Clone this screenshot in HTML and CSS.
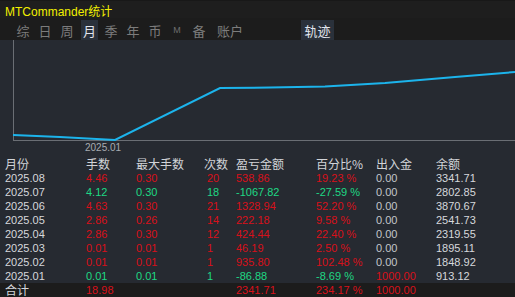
FILE: index.html
```html
<!DOCTYPE html>
<html lang="zh">
<head>
<meta charset="utf-8">
<link rel="stylesheet" href="styles.css">
</head>
<body>
<div class="app">
  <div class="title">MTCommander统计</div>
  <div class="tabs">
    <span class="tab">综</span>
    <span class="tab">日</span>
    <span class="tab">周</span>
    <span class="tab active">月</span>
    <span class="tab">季</span>
    <span class="tab">年</span>
    <span class="tab">币</span>
    <span class="tab small">M</span>
    <span class="tab">备</span>
    <span class="tab wide">账户</span>
    <span class="tab track">轨迹</span>
  </div>
  <div class="chart">
    <svg width="515" height="117" viewBox="0 0 515 117">
      <line x1="13.5" y1="0" x2="13.5" y2="100.5" stroke="#6a6e74" stroke-width="1"/>
      <line x1="13" y1="100.5" x2="515" y2="100.5" stroke="#6a6e74" stroke-width="1"/>
      <polyline points="13,95 60,97 115,100 220,48 270,47.5 325,46.5 385,43 455,37 515,32" fill="none" stroke="#1cb4ec" stroke-width="2"/>
      <text x="85" y="111" class="axis-label">2025.01</text>
    </svg>
  </div>
  <div class="table">
    <div class="row head">
      <span>月份</span><span>手数</span><span>最大手数</span><span>次数</span><span>盈亏金额</span><span>百分比%</span><span>出入金</span><span>余额</span>
    </div>
    <div class="row">
      <span class="w">2025.08</span><span class="r">4.46</span><span class="r">0.30</span><span class="r n">20</span><span class="r">538.86</span><span class="r">19.23 %</span><span class="g0">0.00</span><span class="w">3341.71</span>
    </div>
    <div class="row">
      <span class="w">2025.07</span><span class="gr">4.12</span><span class="gr">0.30</span><span class="gr n">18</span><span class="gr">-1067.82</span><span class="gr">-27.59 %</span><span class="g0">0.00</span><span class="w">2802.85</span>
    </div>
    <div class="row">
      <span class="w">2025.06</span><span class="r">4.63</span><span class="r">0.30</span><span class="r n">21</span><span class="r">1328.94</span><span class="r">52.20 %</span><span class="g0">0.00</span><span class="w">3870.67</span>
    </div>
    <div class="row">
      <span class="w">2025.05</span><span class="r">2.86</span><span class="r">0.26</span><span class="r n">14</span><span class="r">222.18</span><span class="r">9.58 %</span><span class="g0">0.00</span><span class="w">2541.73</span>
    </div>
    <div class="row">
      <span class="w">2025.04</span><span class="r">2.86</span><span class="r">0.30</span><span class="r n">12</span><span class="r">424.44</span><span class="r">22.40 %</span><span class="g0">0.00</span><span class="w">2319.55</span>
    </div>
    <div class="row">
      <span class="w">2025.03</span><span class="r">0.01</span><span class="r">0.01</span><span class="r n">1</span><span class="r">46.19</span><span class="r">2.50 %</span><span class="g0">0.00</span><span class="w">1895.11</span>
    </div>
    <div class="row">
      <span class="w">2025.02</span><span class="r">0.01</span><span class="r">0.01</span><span class="r n">1</span><span class="r">935.80</span><span class="r">102.48 %</span><span class="g0">0.00</span><span class="w">1848.92</span>
    </div>
    <div class="row">
      <span class="w">2025.01</span><span class="gr">0.01</span><span class="gr">0.01</span><span class="gr n">1</span><span class="gr">-86.88</span><span class="gr">-8.69 %</span><span class="r">1000.00</span><span class="w">913.12</span>
    </div>
    <div class="row foot">
      <span class="w cjk">合计</span><span class="r">18.98</span><span></span><span></span><span class="r">2341.71</span><span class="r">234.17 %</span><span class="r">1000.00</span><span></span>
    </div>
  </div>
</div>
</body>
</html>
```
FILE: styles.css
```css
* { box-sizing: border-box; margin: 0; padding: 0; }
html, body {
  width: 515px;
  height: 297px;
  overflow: hidden;
  background: #262a31;
}
body {
  font-family: "Liberation Sans", "Noto Sans CJK SC", sans-serif;
}
.app {
  display: flex;
  flex-direction: column;
  width: 515px;
  height: 297px;
}
.title {
  height: 18px;
  background: #1e1e1e;
  color: #f2f000;
  font-family: "Liberation Sans", "Noto Sans CJK SC", sans-serif;
  font-size: 12px;
  line-height: 18px;
  padding-left: 5px;
  padding-top: 2px;
  border-top: 1px solid #181818;
}
.tabs {
  height: 22px;
  background: #1c1c1c;
  display: flex;
  align-items: stretch;
  padding-left: 12px;
  font-family: "Noto Sans CJK SC", sans-serif;
  font-size: 13px;
  color: #7c7c7c;
}
.tab {
  display: flex;
  align-items: center;
  justify-content: center;
  width: 22px;
  height: 20px;
  margin-top: 2px;
}
.tab.small {
  font-size: 9px;
  font-family: "Liberation Sans", sans-serif;
  color: #6e6e6e;
}
.tab.wide { width: 34px; margin-left: 3px; }
.tab.active {
  background: #2a313b;
  color: #e2e6ee;
  width: 17px;
  margin-left: 3px;
  margin-right: 2px;
}
.tab.track {
  margin-left: 54px;
  width: 33px;
  background: #2a313b;
  color: #e2e6ee;
}
.chart {
  height: 117px;
  background: #262a31;
}
.chart svg { display: block; }
.axis-label {
  font-family: "Liberation Sans", sans-serif;
  font-size: 10px;
  fill: #a8acb2;
}
.table {
  display: flex;
  flex-direction: column;
  font-size: 11px;
}
.row {
  display: grid;
  grid-template-columns: 81px 50px 69px 31px 80px 60px 60px 1fr;
  height: 14px;
  line-height: 14px;
  padding-left: 5px;
  white-space: nowrap;
}
.row.head {
  font-family: "Noto Sans CJK SC", sans-serif;
  font-size: 12px;
  color: #d2d4d8;
  line-height: 14px;
}
.row.head span:nth-child(4) { margin-left: -1px; }
.row.foot {
  background: #1c1c1c;
}
.cjk {
  font-family: "Noto Sans CJK SC", sans-serif;
  font-size: 12px;
}
.w { color: #d6d8dc; }
.r { color: #d8101a; }
.gr { color: #1ed884; }
.g0 { color: #c4c6ca; }
.n { padding-left: 2px; }
```
